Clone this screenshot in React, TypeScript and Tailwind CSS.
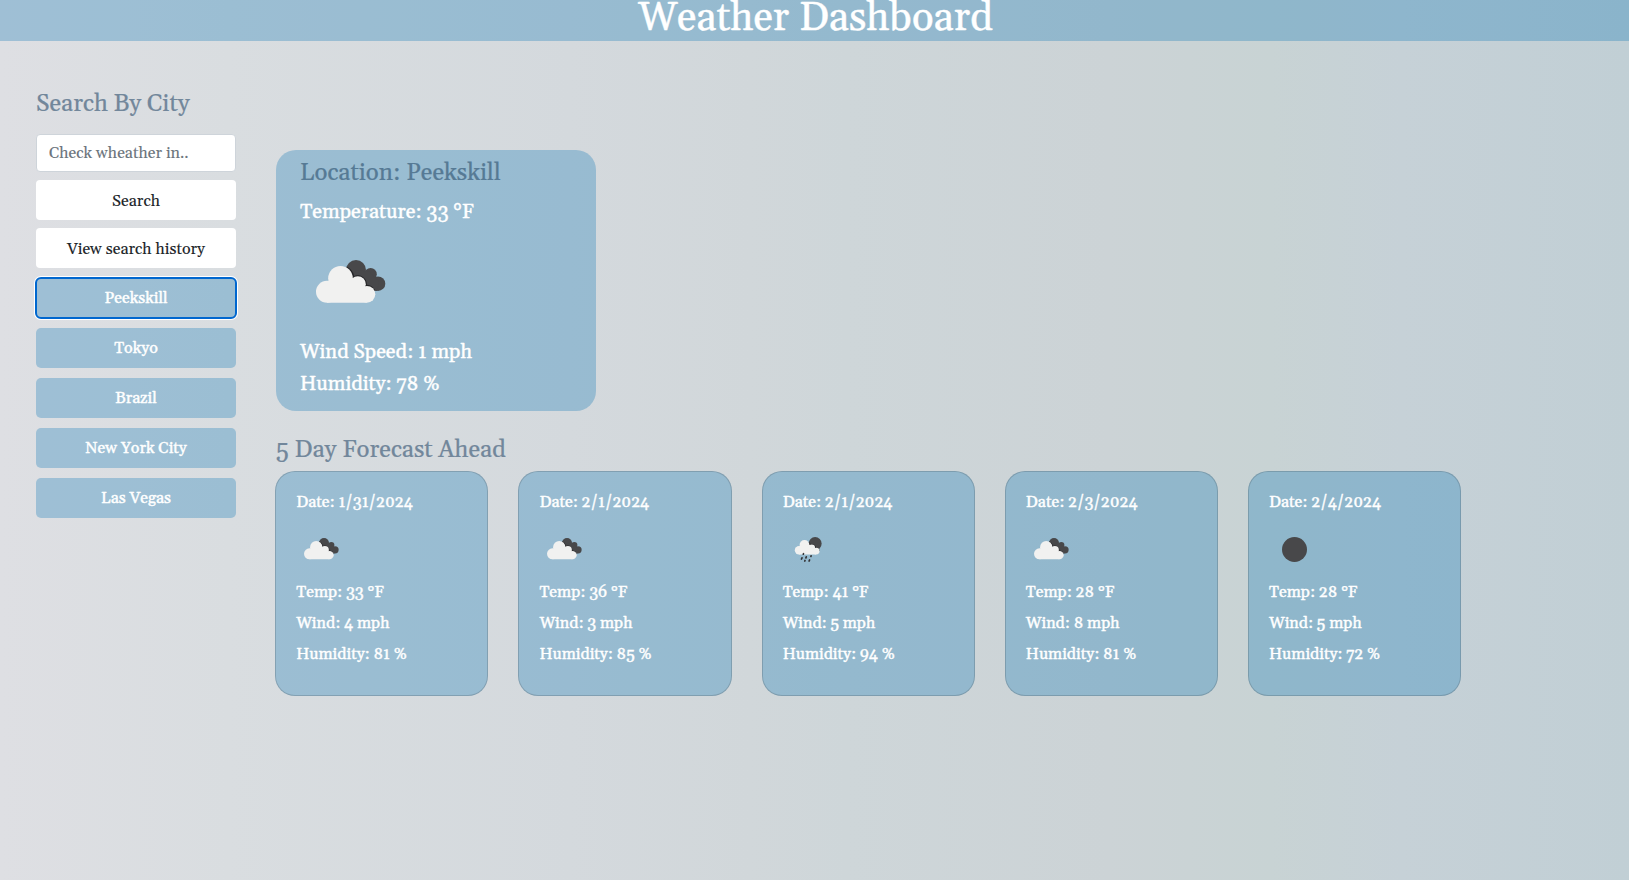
import type { ReactNode } from 'react';

type IconKind = 'clouds' | 'rain' | 'clear';

type Day = {
  date: string;
  icon: IconKind;
  temp: number;
  wind: number;
  humidity: number;
};

const cities = ['Peekskill', 'Tokyo', 'Brazil', 'New York City', 'Las Vegas'];

const days: Day[] = [
  { date: '1/31/2024', icon: 'clouds', temp: 33, wind: 4, humidity: 81 },
  { date: '2/1/2024', icon: 'clouds', temp: 36, wind: 3, humidity: 85 },
  { date: '2/1/2024', icon: 'rain', temp: 41, wind: 5, humidity: 94 },
  { date: '2/3/2024', icon: 'clouds', temp: 28, wind: 8, humidity: 81 },
  { date: '2/4/2024', icon: 'clear', temp: 28, wind: 5, humidity: 72 },
];

function Clouds() {
  return (
    <>
      <g fill="#48484a">
        <circle cx="56" cy="38" r="10" />
        <circle cx="70.6" cy="42.2" r="6.2" />
        <circle cx="78" cy="51.7" r="7.3" />
        <path d="M56 38 L70 40 L79 50 L77 59 L64 58 L52 47Z" />
      </g>
      <g fill="#242426">
        <path d="M46.6 34.6 A13.8 13.8 0 0 1 54.2 43.9 A9.3 9.3 0 0 1 66.9 52.8 A9.8 9.8 0 0 1 75.2 58.8 L60 62 L46 50Z" />
      </g>
      <g fill="#f1f1f0">
        <circle cx="27" cy="59.7" r="11" />
        <circle cx="40.5" cy="46.3" r="12.3" />
        <circle cx="57.8" cy="52.2" r="8" />
        <circle cx="66.9" cy="62.3" r="8.4" />
        <path d="M27 70.7 L27 50 L50 44 L62 54 L66.9 70.7Z" />
      </g>
    </>
  );
}

function Rain() {
  return (
    <>
      <circle cx="64.3" cy="39.2" r="13" fill="#48484a" />
      <path d="M51.4 36 A11 11 0 0 1 55.5 40.5 A8 8 0 0 1 66 47.5 Q71.5 48 74.2 53 L60 56 L48 44Z" fill="#242426" />
      <g fill="#f1f1f0">
        <circle cx="32" cy="52.6" r="8.4" />
        <circle cx="43" cy="42" r="9.8" />
        <circle cx="57.5" cy="47.8" r="6.6" />
        <circle cx="66.3" cy="54.2" r="6.8" />
        <path d="M32 61 L32 45 L50 40 L61 47 L66.3 61Z" />
      </g>
      <g stroke="#333335" strokeWidth="3.4" strokeLinecap="round">
        <path d="M41 59.4 L40.6 60.4" />
        <path d="M38 67.6 L37 70" />
        <path d="M46.6 65.6 L45.8 67.8" />
        <path d="M56.2 63.8 L55.8 64.8" />
        <path d="M44 73 L43.6 74" />
        <path d="M53.2 71.8 L52.2 74" />
      </g>
    </>
  );
}

function WeatherIcon({ kind, className }: { kind: IconKind; className: string }) {
  return (
    <svg viewBox="0 0 100 100" className={className} aria-hidden="true">
      {kind === 'clouds' && <Clouds />}
      {kind === 'rain' && <Rain />}
      {kind === 'clear' && <circle cx="51" cy="51" r="25" fill="#48484a" />}
    </svg>
  );
}

function CityButton({ active, children }: { active: boolean; children: ReactNode }) {
  const ring = active
    ? 'outline-2 -outline-offset-1 outline-[#0067cf] shadow-[0_0_0_2px_#fff]'
    : 'outline-none';
  return (
    <button className={`h-10 w-full rounded-[5px] bg-[rgba(14,119,181,0.3)] leading-6 text-white ${ring}`}>
      {children}
    </button>
  );
}

function ForecastCard({ day }: { day: Day }) {
  return (
    <article className="h-[225px] rounded-[20px] border border-black/[0.15] bg-[rgba(14,119,181,0.3)] px-5 pt-[18px] leading-6 text-white">
      <p>Date: {day.date}</p>
      <WeatherIcon kind={day.icon} className="mt-2.5 mb-1.5 size-[50px]" />
      <div className="flex flex-col gap-[7px]">
        <p>Temp: {day.temp} °F</p>
        <p>Wind: {day.wind} mph</p>
        <p>Humidity: {day.humidity} %</p>
      </div>
    </article>
  );
}

export default function App() {
  return (
    <div className="min-h-screen bg-[linear-gradient(90deg,#dedfe3_0%,#d9dde0_14%,#d4d9dd_35%,#d1d7da_46%,#ced6d9_52%,#ccd3d6_68%,#c8d3d4_78%,#c6d1d7_86%,#c1cfd5_100%)] font-[Georgia,Gelasio,'Liberation_Serif',serif] text-base [-webkit-text-stroke:0.4px_currentColor]">
      <header className="h-[41px] bg-[rgba(14,119,181,0.3)] pl-0.5 text-center">
        <h1 className="text-[40px] leading-[37px] text-white">Weather Dashboard</h1>
      </header>

      <div className="flex">
        <aside className="ml-9 w-[200px] pt-[49px]">
          <h2 className="text-2xl leading-[29px] text-[#72879b] [-webkit-text-stroke:0.2px_currentColor]">Search By City</h2>
          <input
            placeholder="Check wheather in.."
            className="mt-[15px] block h-[38px] w-full rounded border border-[#ced4da] bg-white px-3 leading-6 text-[#212529] [-webkit-text-stroke:0.1px_#6c757d] placeholder:text-[#6c757d] placeholder:opacity-100"
          />
          <div className="mt-2 flex flex-col gap-2 text-[#212529] [-webkit-text-stroke:0.1px_currentColor]">
            <button className="h-10 w-full rounded bg-white pt-0.5 leading-6">Search</button>
            <button className="h-10 w-full rounded bg-white pt-0.5 leading-6">View search history</button>
          </div>
          <div className="mt-2.5 flex flex-col gap-2.5">
            {cities.map((city) => (
              <CityButton key={city} active={city === 'Peekskill'}>
                {city}
              </CityButton>
            ))}
          </div>
        </aside>

        <main className="pt-[109px] pl-[39.25px]">
          <section className="ml-[0.75px] h-[261px] w-[320px] rounded-[20px] bg-[rgba(14,119,181,0.3)] px-6 pt-[9px] text-xl leading-6 text-white">
            <h2 className="text-2xl leading-[29px] text-[#567a95] [-webkit-text-stroke:0.2px_#567a95]">Location: Peekskill</h2>
            <p className="mt-3">Temperature: 33 °F</p>
            <WeatherIcon kind="clouds" className="mt-2 size-[100px]" />
            <p className="mt-2">Wind Speed: 1 mph</p>
            <p className="mt-2">Humidity: 78 %</p>
          </section>

          <h2 className="mt-[25px] ml-[0.75px] text-2xl leading-[29px] text-[#72879b] [-webkit-text-stroke:0.2px_#72879b]">5 Day Forecast Ahead</h2>
          <section className="mt-1.5 grid w-[1186px] grid-cols-5 gap-[30px]">
            {days.map((day, i) => (
              <ForecastCard key={i} day={day} />
            ))}
          </section>
        </main>
      </div>
    </div>
  );
}
